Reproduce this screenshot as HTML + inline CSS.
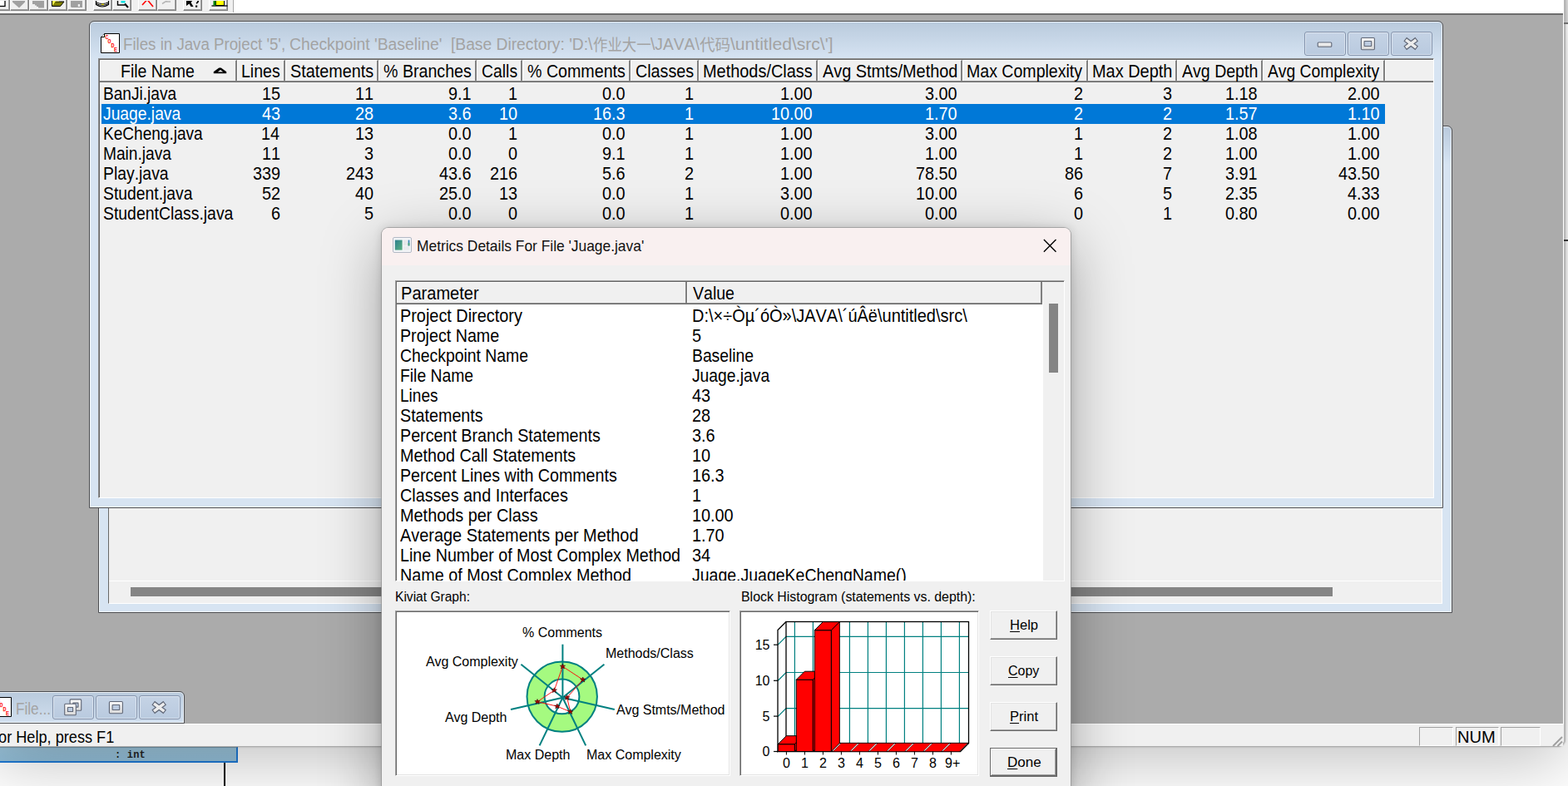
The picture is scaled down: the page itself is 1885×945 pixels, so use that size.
<!DOCTYPE html><html lang="en"><head><meta charset="utf-8"><title>Metrics Details</title><style>
*{box-sizing:border-box;margin:0;padding:0}
html,body{width:1885px;height:945px;overflow:hidden;background:#fff}
body{position:relative;font-family:"Liberation Sans","Noto Sans CJK SC",sans-serif;color:#000}
.abs{position:absolute}
.x{position:absolute;white-space:pre;font-kerning:none;font-size:22px;line-height:24px;transform-origin:0 0}
.s{position:absolute;white-space:pre;font-kerning:none;font-size:16px;line-height:18px;transform-origin:0 0}
.hd{position:absolute;top:72px;height:25px;background:#f0f0f0;border-left:1px solid #fff;border-top:1px solid #fff;border-right:2px solid #808080}
.frame{position:absolute;border:1px solid #4c4e52;border-radius:6px 6px 0 0;background:linear-gradient(#b9cadc 0,#d3e1f0 40px,#d7e4f2 46px,#d7e4f2 100%);box-shadow:inset 0 0 0 1px rgba(255,255,255,.7)}
.cap{position:absolute;border:1px solid #8594ad;border-radius:3px;background:linear-gradient(#c5d3e5,#b9cadf);box-shadow:inset 0 0 0 1px rgba(255,255,255,.4)}
.btn{position:absolute;left:1190px;width:81px;height:35px;background:#f0f0f0;border:1px solid;border-color:#fff #696969 #696969 #fff;box-shadow:inset -1px -1px 0 #a0a0a0,inset 1px 1px 0 #e3e3e3}
.sunk{position:absolute;background:#fff;border:1px solid;border-color:#a0a0a0 #fff #fff #a0a0a0;box-shadow:inset 1px 1px 0 #696969,inset -1px -1px 0 #e3e3e3}
</style></head><body>
<svg class="abs" width="0" height="0" style="left:0;top:0"><defs><linearGradient id="cg" x1="0" y1="0" x2="0" y2="1"><stop offset="0" stop-color="#fbfbfb"/><stop offset="1" stop-color="#d9d9d9"/></linearGradient></defs></svg>
<div class="abs" style="left:1882px;top:0;width:3px;height:28px;background:#ddd"></div>
<div class="abs" style="left:1880px;top:27px;width:5px;height:2px;background:#6e6e6e"></div>
<div class="abs" style="left:1880px;top:288px;width:5px;height:2px;background:#333"></div>
<div class="abs" style="left:0;top:898px;width:286px;height:19px;background:linear-gradient(#9cc5dc,#93bfd9);border-right:2px solid #1e7ad6;border-bottom:2px solid #1e7ad6;border-top:1px solid #7fa3b8"></div>
<div class="abs" style="left:138px;top:900px;font-family:'Liberation Mono',monospace;font-weight:bold;font-size:12px;line-height:16px;color:#222;white-space:pre;letter-spacing:.2px">: int</div>
<div class="abs" style="left:269px;top:917px;width:2px;height:28px;background:#000"></div>
<div class="abs" style="left:-11px;top:-11px;width:1893px;height:909px;background:#fff;border:1px solid #adadad;border-right:2px solid #b6b6b6;border-radius:0 0 9px 0;box-shadow:0 20px 80px rgba(0,0,0,.24),0 0 2px rgba(0,0,0,.3);overflow:hidden">
<div class="abs" style="left:0;top:0;width:291px;height:25px;background:#f0f0f0;border-right:1px solid #a8a8a8"></div>
<div class="abs" style="left:0;top:26px;width:1889px;height:2px;background:#6c6c6c"></div>
<div class="abs" style="left:0;top:28px;width:1889px;height:852px;background:#ababab"></div>
<div class="abs" style="left:0;top:881px;width:1892px;height:27px;background:#f0f0f0"></div>
</div>
<div class="abs" style="left:1880px;top:27px;width:5px;height:2px;background:#6e6e6e"></div>
<div class="abs" style="left:1880px;top:288px;width:5px;height:2px;background:#333"></div>
<div class="abs" style="left:-12px;top:-12px;width:24px;height:25px;background:#f0f0f0;border:1px solid;border-color:#fff #808080 #808080 #fff;box-shadow:inset -1px -1px 0 #a0a0a0"></div>
<div class="abs" style="left:12px;top:-12px;width:23px;height:25px;background:#f0f0f0;border:1px solid;border-color:#fff #808080 #808080 #fff;box-shadow:inset -1px -1px 0 #a0a0a0"></div>
<div class="abs" style="left:35px;top:-12px;width:23px;height:25px;background:#f0f0f0;border:1px solid;border-color:#fff #808080 #808080 #fff;box-shadow:inset -1px -1px 0 #a0a0a0"></div>
<div class="abs" style="left:58px;top:-12px;width:23px;height:25px;background:#f0f0f0;border:1px solid;border-color:#fff #808080 #808080 #fff;box-shadow:inset -1px -1px 0 #a0a0a0"></div>
<div class="abs" style="left:81px;top:-12px;width:23px;height:25px;background:#f0f0f0;border:1px solid;border-color:#fff #808080 #808080 #fff;box-shadow:inset -1px -1px 0 #a0a0a0"></div>
<div class="abs" style="left:112px;top:-12px;width:23px;height:25px;background:#f0f0f0;border:1px solid;border-color:#fff #808080 #808080 #fff;box-shadow:inset -1px -1px 0 #a0a0a0"></div>
<div class="abs" style="left:135px;top:-12px;width:23px;height:25px;background:#f0f0f0;border:1px solid;border-color:#fff #808080 #808080 #fff;box-shadow:inset -1px -1px 0 #a0a0a0"></div>
<div class="abs" style="left:166px;top:-12px;width:23px;height:25px;background:#f0f0f0;border:1px solid;border-color:#fff #808080 #808080 #fff;box-shadow:inset -1px -1px 0 #a0a0a0"></div>
<div class="abs" style="left:189px;top:-12px;width:23px;height:25px;background:#f0f0f0;border:1px solid;border-color:#fff #808080 #808080 #fff;box-shadow:inset -1px -1px 0 #a0a0a0"></div>
<div class="abs" style="left:220px;top:-12px;width:23px;height:25px;background:#f0f0f0;border:1px solid;border-color:#fff #808080 #808080 #fff;box-shadow:inset -1px -1px 0 #a0a0a0"></div>
<div class="abs" style="left:251px;top:-12px;width:23px;height:25px;background:#f0f0f0;border:1px solid;border-color:#fff #808080 #808080 #fff;box-shadow:inset -1px -1px 0 #a0a0a0"></div>
<svg class="abs" style="left:0;top:1px" width="290" height="11" viewBox="0 0 290 11"><rect x="-3" y="-3" width="9" height="9.5" fill="#fff" stroke="#000" stroke-width="1.3"/><path d="M15 0h15v1.5l-7 7-8-7z" fill="#a0a0a0"/><path d="M39 0h14v8.5h-7v-1.5h-2v-1.5h-2v-1.5h-3z" fill="#a0a0a0"/><path d="M62.5 -1v7.5h10l4.5-5.5h-10.5z" fill="#808000" stroke="#000" stroke-width="1"/><path d="M63 -1h8v1.5h-4l-4 5z" fill="#ffff50"/><path d="M85 -1h14v9h-13l-1-1z" fill="#a0a0a0"/><rect x="93.8" y="4" width="2.2" height="3" fill="#f0f0f0"/><path d="M115.5 0v4.5q7.5 5 15 0v-4.5" fill="#fff" stroke="#000" stroke-width="1.2"/><path d="M115.5 1.8q7.5 3.4 15 0M115.5 3.5q7.5 3.6 15 0" fill="none" stroke="#000" stroke-width="1"/><rect x="122" y="3.6" width="3" height="1.3" fill="#e8d800"/><path d="M141.5 -1v6h9" fill="none" stroke="#000" stroke-width="1.4"/><rect x="145.5" y="-2" width="5" height="4.5" fill="#00e0e0"/><path d="M150 3.5l4 4.5" stroke="#000" stroke-width="2"/><path d="M171 5l6-6.5 7 8.5" fill="none" stroke="#f00" stroke-width="1.6"/><path d="M195 3.5l4-2.5 3-2.5M199 1h6" stroke="#b4b4b4" stroke-width="1.5" fill="none"/><path d="M224 -1h8l-2.5 3 3 5h-3l-2-3.5-3.5 2.500z" fill="#000"/><path d="M235.500 -1c3.500 0 3.500 2.500 .5 4" stroke="#000" stroke-width="1.700" fill="none"/><rect x="235" y="5.500" width="2.200" height="2.200" fill="#000"/><rect x="259.500" y="-3" width="10" height="8.500" fill="#ff0" stroke="#000" stroke-width="1"/><path d="M254.500 6h19" stroke="#000" stroke-width="1.300"/><path d="M256.500 -2v8l3-1v-7z" fill="#008000"/></svg>
<div class="frame" style="left:118px;top:151px;width:1628px;height:586px"></div>
<div class="abs" style="left:130px;top:197px;width:1604px;height:529px;background:#f0f0f0;border:1px solid;border-color:#696969 #fff #fff #696969"></div>
<div class="abs" style="left:131px;top:698px;width:1602px;height:1px;background:#fff"></div>
<div class="abs" style="left:157px;top:706px;width:1445px;height:11px;background:#858585"></div>
<div class="frame" style="left:107px;top:25px;width:1628px;height:586px"></div>
<svg class="abs" style="left:121px;top:40px" width="23" height="24" viewBox="0 0 23 24"><path d="M4.5 .5h18v23h-22v-19z" fill="#fff" stroke="#000" stroke-width="1"/><path d="M.5 4.500h4v-4" fill="#fff" stroke="#000" stroke-width="1"/><g font-size="6.5" fill="#f00" stroke="#f00" stroke-width=".25" font-family="Liberation Mono,monospace"><text x="5.5" y="7">C</text><text x="8.5" y="11.5">O</text><text x="12.5" y="17">D</text><text x="16" y="22">E</text></g></svg>
<div class="x" style="left:148.17px;top:40.9px;font-size:20px;line-height:24px;transform:scaleX(0.9343);color:#a3a3a3">Files in Java Project '5',</div>
<div class="x" style="left:347.82px;top:40.9px;font-size:20px;line-height:24px;transform:scaleX(0.9662);color:#a3a3a3">Checkpoint 'Baseline'</div>
<div class="x" style="left:542.13px;top:40.9px;font-size:20px;line-height:24px;transform:scaleX(0.9615);color:#a3a3a3">[Base Directory: 'D:\</div>
<div class="x" style="left:712.5px;top:42.2px;font-size:19px;line-height:26px;color:#a3a3a3;transform:scaleX(0.9145)">作业大一</div>
<div class="x" style="left:781.7px;top:40.9px;font-size:20px;line-height:24px;transform:scaleX(0.9618);color:#a3a3a3">\JAVA\</div>
<div class="x" style="left:841.3px;top:42.2px;font-size:19px;line-height:26px;color:#a3a3a3;transform:scaleX(0.9789)">代码</div>
<div class="x" style="left:878.2px;top:40.9px;font-size:20px;line-height:24px;transform:scaleX(1.0547);color:#a3a3a3">\untitled\src\']</div>
<div class="cap" style="left:1568px;top:38px;width:50px;height:29px"></div>
<svg class="abs" style="left:1568px;top:38px" width="50" height="29" viewBox="0 0 50 29"><rect x="16.2" y="13" width="16.6" height="5.2" rx="1" fill="url(#cg)" stroke="#5f6676" stroke-width="1.1"/></svg>
<div class="cap" style="left:1620px;top:38px;width:50px;height:29px"></div>
<svg class="abs" style="left:1620px;top:38px" width="50" height="29" viewBox="0 0 50 29"><rect x="16.4" y="7.5" width="16" height="14.2" rx="1.2" fill="url(#cg)" stroke="#5f6676" stroke-width="1.1"/><rect x="20.1" y="11.5" width="8.6" height="6" rx="0.4" fill="#bccbe0" stroke="#5f6676" stroke-width="1.1"/></svg>
<div class="cap" style="left:1672px;top:38px;width:50px;height:29px"></div>
<svg class="abs" style="left:1672px;top:38px" width="50" height="29" viewBox="0 0 50 29"><path d="M17.2 9.2l14 10.6m0 -10.6l-14 10.6" stroke="#5f6676" stroke-width="6" stroke-linecap="butt"/><path d="M17.2 9.2m.8 .6l12.4 9.4m0 -9.4l-12.4 9.4" stroke="#ececec" stroke-width="3.5" stroke-linecap="butt"/></svg>
<div class="abs" style="left:118px;top:70px;width:1606px;height:529px;background:#f0f0f0;border:1px solid;border-color:#8c8c8c #fff #fff #8c8c8c;box-shadow:inset 1px 1px 0 #696969"></div>
<div class="abs" style="left:120px;top:97px;width:1603px;height:2px;background:linear-gradient(#8e8e8e 50%,#6a6a6a 50%)"></div>
<div class="hd" style="left:120px;width:165px"></div>
<div class="x" style="left:144.7px;top:73.5px;transform:scaleX(0.8855)">File Name</div>
<div class="hd" style="left:285px;width:58px"></div>
<div class="x" style="left:290.4px;top:73.5px;transform:scaleX(0.8881)">Lines</div>
<div class="hd" style="left:343px;width:112px"></div>
<div class="x" style="left:349.1px;top:73.5px;transform:scaleX(0.8988)">Statements</div>
<div class="hd" style="left:455px;width:118px"></div>
<div class="x" style="left:461.3px;top:73.5px;transform:scaleX(0.8920)">% Branches</div>
<div class="hd" style="left:573px;width:55px"></div>
<div class="x" style="left:579.02px;top:73.5px;transform:scaleX(0.8811)">Calls</div>
<div class="hd" style="left:628px;width:130px"></div>
<div class="x" style="left:634.3px;top:73.5px;transform:scaleX(0.8923)">% Comments</div>
<div class="hd" style="left:758px;width:82px"></div>
<div class="x" style="left:764px;top:73.5px;transform:scaleX(0.8961)">Classes</div>
<div class="hd" style="left:840px;width:143px"></div>
<div class="x" style="left:845.37px;top:73.5px;transform:scaleX(0.9055)">Methods/Class</div>
<div class="hd" style="left:983px;width:174px"></div>
<div class="x" style="left:988.96px;top:73.5px;transform:scaleX(0.9031)">Avg Stmts/Method</div>
<div class="hd" style="left:1157px;width:151px"></div>
<div class="x" style="left:1162.4px;top:73.5px;transform:scaleX(0.8886)">Max Complexity</div>
<div class="hd" style="left:1308px;width:107px"></div>
<div class="x" style="left:1313.37px;top:73.5px;transform:scaleX(0.9055)">Max Depth</div>
<div class="hd" style="left:1415px;width:103px"></div>
<div class="x" style="left:1420.96px;top:73.5px;transform:scaleX(0.8888)">Avg Depth</div>
<div class="hd" style="left:1518px;width:147px"></div>
<div class="x" style="left:1523.96px;top:73.5px;transform:scaleX(0.8773)">Avg Complexity</div>
<div class="hd" style="left:1665px;width:58px;border-right:0"></div>
<svg class="abs" style="left:256px;top:81px" width="18" height="8" viewBox="0 0 18 8"><path d="M.8 7.2v-2l6.5-4.7h2.4l6.5 4.7v2z" fill="#000"/><path d="M5.8 5.6h6.4l-3.2-2.5z" fill="#f0f0f0"/></svg>
<div class="x" style="left:124.1px;top:100.5px;transform:scaleX(0.8680)">BanJi.java</div>
<div class="x" style="left:314.66px;top:100.5px;transform:scaleX(0.9020)">15</div>
<div class="x" style="left:426.8px;top:100.5px;transform:scaleX(0.9020)">11</div>
<div class="x" style="left:539.28px;top:100.5px;transform:scaleX(0.9020)">9.1</div>
<div class="x" style="left:610.83px;top:100.5px;transform:scaleX(0.9020)">1</div>
<div class="x" style="left:724.09px;top:100.5px;transform:scaleX(0.9020)">0.0</div>
<div class="x" style="left:822.83px;top:100.5px;transform:scaleX(0.9020)">1</div>
<div class="x" style="left:938.05px;top:100.5px;transform:scaleX(0.9020)">1.00</div>
<div class="x" style="left:1112.05px;top:100.5px;transform:scaleX(0.9020)">3.00</div>
<div class="x" style="left:1290.86px;top:100.5px;transform:scaleX(0.9020)">2</div>
<div class="x" style="left:1397.74px;top:100.5px;transform:scaleX(0.9020)">3</div>
<div class="x" style="left:1473.14px;top:100.5px;transform:scaleX(0.9020)">1.18</div>
<div class="x" style="left:1620.05px;top:100.5px;transform:scaleX(0.9020)">2.00</div>
<div class="abs" style="left:122px;top:125px;width:1543px;height:24px;background:#0078d7"></div>
<div class="x" style="left:124.1px;top:124.5px;transform:scaleX(0.8758);color:#fff">Juage.java</div>
<div class="x" style="left:314.7px;top:124.5px;transform:scaleX(0.9020);color:#fff">43</div>
<div class="x" style="left:426.69px;top:124.5px;transform:scaleX(0.9020);color:#fff">28</div>
<div class="x" style="left:539.19px;top:124.5px;transform:scaleX(0.9020);color:#fff">3.6</div>
<div class="x" style="left:599.6px;top:124.5px;transform:scaleX(0.9020);color:#fff">10</div>
<div class="x" style="left:713.15px;top:124.5px;transform:scaleX(0.9020);color:#fff">16.3</div>
<div class="x" style="left:822.83px;top:124.5px;transform:scaleX(0.9020);color:#fff">1</div>
<div class="x" style="left:927.02px;top:124.5px;transform:scaleX(0.9020);color:#fff">10.00</div>
<div class="x" style="left:1112.05px;top:124.5px;transform:scaleX(0.9020);color:#fff">1.70</div>
<div class="x" style="left:1290.86px;top:124.5px;transform:scaleX(0.9020);color:#fff">2</div>
<div class="x" style="left:1397.86px;top:124.5px;transform:scaleX(0.9020);color:#fff">2</div>
<div class="x" style="left:1473.28px;top:124.5px;transform:scaleX(0.9020);color:#fff">1.57</div>
<div class="x" style="left:1620.05px;top:124.5px;transform:scaleX(0.9020);color:#fff">1.10</div>
<div class="x" style="left:124.1px;top:148.5px;transform:scaleX(0.8661)">KeCheng.java</div>
<div class="x" style="left:314.41px;top:148.5px;transform:scaleX(0.9020)">14</div>
<div class="x" style="left:426.7px;top:148.5px;transform:scaleX(0.9020)">13</div>
<div class="x" style="left:539.09px;top:148.5px;transform:scaleX(0.9020)">0.0</div>
<div class="x" style="left:610.83px;top:148.5px;transform:scaleX(0.9020)">1</div>
<div class="x" style="left:724.09px;top:148.5px;transform:scaleX(0.9020)">0.0</div>
<div class="x" style="left:822.83px;top:148.5px;transform:scaleX(0.9020)">1</div>
<div class="x" style="left:938.05px;top:148.5px;transform:scaleX(0.9020)">1.00</div>
<div class="x" style="left:1112.05px;top:148.5px;transform:scaleX(0.9020)">3.00</div>
<div class="x" style="left:1290.83px;top:148.5px;transform:scaleX(0.9020)">1</div>
<div class="x" style="left:1397.86px;top:148.5px;transform:scaleX(0.9020)">2</div>
<div class="x" style="left:1473.14px;top:148.5px;transform:scaleX(0.9020)">1.08</div>
<div class="x" style="left:1620.05px;top:148.5px;transform:scaleX(0.9020)">1.00</div>
<div class="x" style="left:124.1px;top:172.5px;transform:scaleX(0.8709)">Main.java</div>
<div class="x" style="left:314.8px;top:172.5px;transform:scaleX(0.9020)">11</div>
<div class="x" style="left:437.74px;top:172.5px;transform:scaleX(0.9020)">3</div>
<div class="x" style="left:539.09px;top:172.5px;transform:scaleX(0.9020)">0.0</div>
<div class="x" style="left:610.64px;top:172.5px;transform:scaleX(0.9020)">0</div>
<div class="x" style="left:724.28px;top:172.5px;transform:scaleX(0.9020)">9.1</div>
<div class="x" style="left:822.83px;top:172.5px;transform:scaleX(0.9020)">1</div>
<div class="x" style="left:938.05px;top:172.5px;transform:scaleX(0.9020)">1.00</div>
<div class="x" style="left:1112.05px;top:172.5px;transform:scaleX(0.9020)">1.00</div>
<div class="x" style="left:1290.83px;top:172.5px;transform:scaleX(0.9020)">1</div>
<div class="x" style="left:1397.86px;top:172.5px;transform:scaleX(0.9020)">2</div>
<div class="x" style="left:1473.05px;top:172.5px;transform:scaleX(0.9020)">1.00</div>
<div class="x" style="left:1620.05px;top:172.5px;transform:scaleX(0.9020)">1.00</div>
<div class="x" style="left:124.1px;top:196.5px;transform:scaleX(0.8805)">Play.java</div>
<div class="x" style="left:303.73px;top:196.5px;transform:scaleX(0.9020)">339</div>
<div class="x" style="left:415.66px;top:196.5px;transform:scaleX(0.9020)">243</div>
<div class="x" style="left:528.15px;top:196.5px;transform:scaleX(0.9020)">43.6</div>
<div class="x" style="left:588.66px;top:196.5px;transform:scaleX(0.9020)">216</div>
<div class="x" style="left:724.19px;top:196.5px;transform:scaleX(0.9020)">5.6</div>
<div class="x" style="left:822.86px;top:196.5px;transform:scaleX(0.9020)">2</div>
<div class="x" style="left:938.05px;top:196.5px;transform:scaleX(0.9020)">1.00</div>
<div class="x" style="left:1101.02px;top:196.5px;transform:scaleX(0.9020)">78.50</div>
<div class="x" style="left:1279.7px;top:196.5px;transform:scaleX(0.9020)">86</div>
<div class="x" style="left:1397.86px;top:196.5px;transform:scaleX(0.9020)">7</div>
<div class="x" style="left:1473.25px;top:196.5px;transform:scaleX(0.9020)">3.91</div>
<div class="x" style="left:1609.02px;top:196.5px;transform:scaleX(0.9020)">43.50</div>
<div class="x" style="left:124.1px;top:220.5px;transform:scaleX(0.8789)">Student.java</div>
<div class="x" style="left:314.83px;top:220.5px;transform:scaleX(0.9020)">52</div>
<div class="x" style="left:426.6px;top:220.5px;transform:scaleX(0.9020)">40</div>
<div class="x" style="left:528.05px;top:220.5px;transform:scaleX(0.9020)">25.0</div>
<div class="x" style="left:599.7px;top:220.5px;transform:scaleX(0.9020)">13</div>
<div class="x" style="left:724.09px;top:220.5px;transform:scaleX(0.9020)">0.0</div>
<div class="x" style="left:822.83px;top:220.5px;transform:scaleX(0.9020)">1</div>
<div class="x" style="left:938.05px;top:220.5px;transform:scaleX(0.9020)">3.00</div>
<div class="x" style="left:1101.02px;top:220.5px;transform:scaleX(0.9020)">10.00</div>
<div class="x" style="left:1290.74px;top:220.5px;transform:scaleX(0.9020)">6</div>
<div class="x" style="left:1397.7px;top:220.5px;transform:scaleX(0.9020)">5</div>
<div class="x" style="left:1473.11px;top:220.5px;transform:scaleX(0.9020)">2.35</div>
<div class="x" style="left:1620.15px;top:220.5px;transform:scaleX(0.9020)">4.33</div>
<div class="x" style="left:124.1px;top:244.5px;transform:scaleX(0.8820)">StudentClass.java</div>
<div class="x" style="left:325.74px;top:244.5px;transform:scaleX(0.9020)">6</div>
<div class="x" style="left:437.7px;top:244.5px;transform:scaleX(0.9020)">5</div>
<div class="x" style="left:539.09px;top:244.5px;transform:scaleX(0.9020)">0.0</div>
<div class="x" style="left:610.64px;top:244.5px;transform:scaleX(0.9020)">0</div>
<div class="x" style="left:724.09px;top:244.5px;transform:scaleX(0.9020)">0.0</div>
<div class="x" style="left:822.83px;top:244.5px;transform:scaleX(0.9020)">1</div>
<div class="x" style="left:938.05px;top:244.5px;transform:scaleX(0.9020)">0.00</div>
<div class="x" style="left:1112.05px;top:244.5px;transform:scaleX(0.9020)">0.00</div>
<div class="x" style="left:1290.64px;top:244.5px;transform:scaleX(0.9020)">0</div>
<div class="x" style="left:1397.83px;top:244.5px;transform:scaleX(0.9020)">1</div>
<div class="x" style="left:1473.05px;top:244.5px;transform:scaleX(0.9020)">0.80</div>
<div class="x" style="left:1620.05px;top:244.5px;transform:scaleX(0.9020)">0.00</div>
<div class="frame" style="left:-10px;top:831px;width:232px;height:39px"></div>
<svg class="abs" style="left:-9px;top:838px" width="23" height="24" viewBox="0 0 23 24"><path d="M4.5 .5h18v23h-22v-19z" fill="#fff" stroke="#000" stroke-width="1"/><path d="M.5 4.500h4v-4" fill="#fff" stroke="#000" stroke-width="1"/><g font-size="6.5" fill="#f00" stroke="#f00" stroke-width=".25" font-family="Liberation Mono,monospace"><text x="5.5" y="7">C</text><text x="8.5" y="11.5">O</text><text x="12.5" y="17">D</text><text x="16" y="22">E</text></g></svg>
<div class="x" style="left:18.59px;top:841.4px;font-size:20px;line-height:23px;transform:scaleX(0.8585);color:#a3a3a3">File...</div>
<div class="cap" style="left:63px;top:836px;width:50px;height:29px"></div>
<svg class="abs" style="left:63px;top:836px" width="50" height="29" viewBox="0 0 50 29"><rect x="21.1" y="4.9" width="13.6" height="13.4" rx="1" fill="url(#cg)" stroke="#5f6676" stroke-width="1.1"/><rect x="24.8" y="9.1" width="6.2" height="5" rx="0.3" fill="#bccbe0" stroke="#5f6676" stroke-width="1.1"/><rect x="14.7" y="10.3" width="13.6" height="13.4" rx="1" fill="url(#cg)" stroke="#5f6676" stroke-width="1.1"/><rect x="18.4" y="14.5" width="6.2" height="5" rx="0.3" fill="#bccbe0" stroke="#5f6676" stroke-width="1.1"/></svg>
<div class="cap" style="left:115px;top:836px;width:50px;height:29px"></div>
<svg class="abs" style="left:115px;top:836px" width="50" height="29" viewBox="0 0 50 29"><rect x="16.4" y="7.5" width="16" height="14.2" rx="1.2" fill="url(#cg)" stroke="#5f6676" stroke-width="1.1"/><rect x="20.1" y="11.5" width="8.6" height="6" rx="0.4" fill="#bccbe0" stroke="#5f6676" stroke-width="1.1"/></svg>
<div class="cap" style="left:167px;top:836px;width:50px;height:29px"></div>
<svg class="abs" style="left:167px;top:836px" width="50" height="29" viewBox="0 0 50 29"><path d="M17.2 9.2l14 10.6m0 -10.6l-14 10.6" stroke="#5f6676" stroke-width="6" stroke-linecap="butt"/><path d="M17.2 9.2m.8 .6l12.4 9.4m0 -9.4l-12.4 9.4" stroke="#ececec" stroke-width="3.5" stroke-linecap="butt"/></svg>
<div class="abs" style="left:0;top:870px;width:1879px;height:1px;background:#fff"></div>
<div class="abs" style="left:0;top:871px;width:1879px;height:26px;background:#f0f0f0"></div>
<div class="x" style="left:-13.49px;top:872.9px;font-size:20.3px;line-height:26px;transform:scaleX(0.8946)">For Help, press F1</div>
<div class="abs" style="left:1706px;top:874px;width:41px;height:23px;border:1px solid;border-color:#a0a0a0 #fff #fff #a0a0a0"></div>
<div class="abs" style="left:1750px;top:874px;width:52px;height:23px;border:1px solid;border-color:#a0a0a0 #fff #fff #a0a0a0"></div>
<div class="abs" style="left:1804px;top:874px;width:48px;height:23px;border:1px solid;border-color:#a0a0a0 #fff #fff #a0a0a0"></div>
<div class="x" style="left:1751.75px;top:872.5px;font-size:20.3px;line-height:26px;transform:scaleX(0.9930)">NUM</div>
<svg class="abs" style="left:1858px;top:877px" width="21" height="21" viewBox="0 0 21 21"><path d="M9 20L20 9M14.5 20L20 14.5" stroke="#a0a0a0" stroke-width="2" fill="none"/></svg>
<div class="abs" style="left:459px;top:274px;width:828px;height:700px;background:#f0f0f0;border-radius:8px;box-shadow:0 0 0 1px rgba(150,150,150,.75),0 20px 70px rgba(0,0,0,.34),0 0 12px rgba(0,0,0,.16);overflow:hidden">
<div class="abs" style="left:0;top:0;width:828px;height:45px;background:#f9f0f0"></div>
</div>
<svg class="abs" style="left:472px;top:285px" width="23" height="19" viewBox="0 0 23 19"><defs><linearGradient id="g1" x1="0" y1="0" x2="1" y2="1"><stop offset="0" stop-color="#2c7f8e"/><stop offset="1" stop-color="#58b080"/></linearGradient></defs><rect x=".5" y=".5" width="22" height="18" rx="1.5" fill="#f2f4f7" stroke="#b4bac6"/><rect x="2.8" y="3.6" width="8.8" height="12" fill="url(#g1)"/><rect x="13" y="3.6" width="4.5" height="6.5" fill="#e6e8ea"/><rect x="18.6" y="3.6" width="1.8" height="6.8" fill="#3f86b8"/><rect x="18.6" y="7" width="1.8" height="3.4" fill="#4fa878"/><rect x="13" y="11.2" width="7.4" height="4.4" fill="#e9ebee"/></svg>
<div class="x" style="left:501.27px;top:283.7px;font-size:18.6px;line-height:24px;transform:scaleX(0.9347);color:#111">Metrics Details For File 'Juage.java'</div>
<svg class="abs" style="left:1253px;top:286px" width="19" height="19" viewBox="0 0 19 19"><path d="M1.9 2.1l14.6 14.6M16.5 2.1L1.9 16.7" stroke="#000" stroke-width="1.4" fill="none"/></svg>
<div class="sunk" style="left:475px;top:337px;width:805px;height:362px"></div>
<div class="abs" style="left:1254px;top:339px;width:25px;height:359px;background:#f0f0f0"></div>
<div class="abs" style="left:1261px;top:365px;width:11px;height:83px;background:#858585"></div>
<div class="abs" style="left:477px;top:339px;width:777px;height:25px;background:#f0f0f0;border-top:1px solid #fff;border-left:1px solid #fff"></div>
<div class="abs" style="left:477px;top:364px;width:776px;height:2px;background:linear-gradient(#8e8e8e 50%,#6a6a6a 50%)"></div>
<div class="abs" style="left:824px;top:339px;width:2px;height:26px;background:#808080"></div><div class="abs" style="left:826px;top:340px;width:1px;height:24px;background:#fff"></div>
<div class="abs" style="left:1251px;top:339px;width:2px;height:26px;background:#808080"></div>
<div class="x" style="left:481.95px;top:340.5px;transform:scaleX(0.9121)">Parameter</div>
<div class="x" style="left:832.81px;top:340.5px;transform:scaleX(0.8880)">Value</div>
<div class="abs" style="left:477px;top:366px;width:777px;height:332px;overflow:hidden;background:#fff">
<div class="x" style="left:4.1px;top:1.5px;transform:scaleX(0.9031)">Project Directory</div>
<div class="x" style="left:355.3px;top:1.5px;transform:scaleX(0.9084)">D:\×÷Òµ´óÒ»\JAVA\´úÂë\untitled\src\</div>
<div class="x" style="left:4.1px;top:25.5px;transform:scaleX(0.8942)">Project Name</div>
<div class="x" style="left:355.3px;top:25.5px;transform:scaleX(0.9020)">5</div>
<div class="x" style="left:4.1px;top:49.5px;transform:scaleX(0.8805)">Checkpoint Name</div>
<div class="x" style="left:355.3px;top:49.5px;transform:scaleX(0.8776)">Baseline</div>
<div class="x" style="left:4.1px;top:73.5px;transform:scaleX(0.8784)">File Name</div>
<div class="x" style="left:355.3px;top:73.5px;transform:scaleX(0.8749)">Juage.java</div>
<div class="x" style="left:4.1px;top:97.5px;transform:scaleX(0.8649)">Lines</div>
<div class="x" style="left:355.3px;top:97.5px;transform:scaleX(0.9020)">43</div>
<div class="x" style="left:4.1px;top:121.5px;transform:scaleX(0.8952)">Statements</div>
<div class="x" style="left:355.3px;top:121.5px;transform:scaleX(0.9020)">28</div>
<div class="x" style="left:4.1px;top:145.5px;transform:scaleX(0.8951)">Percent Branch Statements</div>
<div class="x" style="left:355.3px;top:145.5px;transform:scaleX(0.9020)">3.6</div>
<div class="x" style="left:4.1px;top:169.5px;transform:scaleX(0.8988)">Method Call Statements</div>
<div class="x" style="left:355.3px;top:169.5px;transform:scaleX(0.9020)">10</div>
<div class="x" style="left:4.1px;top:193.5px;transform:scaleX(0.8921)">Percent Lines with Comments</div>
<div class="x" style="left:355.3px;top:193.5px;transform:scaleX(0.9020)">16.3</div>
<div class="x" style="left:4.1px;top:217.5px;transform:scaleX(0.9018)">Classes and Interfaces</div>
<div class="x" style="left:355.3px;top:217.5px;transform:scaleX(0.9020)">1</div>
<div class="x" style="left:4.1px;top:241.5px;transform:scaleX(0.9035)">Methods per Class</div>
<div class="x" style="left:355.3px;top:241.5px;transform:scaleX(0.9020)">10.00</div>
<div class="x" style="left:4.1px;top:265.5px;transform:scaleX(0.9045)">Average Statements per Method</div>
<div class="x" style="left:355.3px;top:265.5px;transform:scaleX(0.9020)">1.70</div>
<div class="x" style="left:4.1px;top:289.5px;transform:scaleX(0.8950)">Line Number of Most Complex Method</div>
<div class="x" style="left:355.3px;top:289.5px;transform:scaleX(0.9020)">34</div>
<div class="x" style="left:4.1px;top:313.5px;transform:scaleX(0.8989)">Name of Most Complex Method</div>
<div class="x" style="left:355.3px;top:313.5px;transform:scaleX(0.8854)">Juage.JuageKeChengName()</div>
</div>
<div class="s" style="left:475.12px;top:708.5px;transform:scaleX(0.9731)">Kiviat Graph:</div>
<div class="s" style="left:890.9px;top:708.5px;transform:scaleX(0.9933)">Block Histogram (statements vs. depth):</div>
<div class="sunk" style="left:475px;top:734px;width:403px;height:199px"></div>
<div class="sunk" style="left:889px;top:734px;width:288px;height:199px"></div>
<svg class="abs" style="left:477px;top:736px" width="399" height="195" viewBox="477 736 399 195" font-family="Liberation Sans,sans-serif" font-size="16"><circle cx="675.7" cy="837.6" r="42.2" fill="#a5fa80" stroke="#008080" stroke-width="2"/><circle cx="675.5" cy="837.4" r="20.9" fill="#fff" stroke="#008080" stroke-width="2"/><line x1="676.4" y1="838.7" x2="676.4" y2="774.7" stroke="#008080" stroke-width="2"/><line x1="676.4" y1="838.7" x2="726.4" y2="798.8" stroke="#008080" stroke-width="2"/><line x1="676.4" y1="838.7" x2="738.8" y2="852.9" stroke="#008080" stroke-width="2"/><line x1="676.4" y1="838.7" x2="704.2" y2="896.4" stroke="#008080" stroke-width="2"/><line x1="676.4" y1="838.7" x2="648.6" y2="896.4" stroke="#008080" stroke-width="2"/><line x1="676.4" y1="838.7" x2="614.0" y2="852.9" stroke="#008080" stroke-width="2"/><line x1="676.4" y1="838.7" x2="626.4" y2="798.8" stroke="#008080" stroke-width="2"/><polygon points="676.4,801.3 700.7,817.2 681.7,838.7 685.7,855.8 669.8,849.2 646.0,843.7 666.3,830.0" fill="none" stroke="#f00" stroke-width="0.9"/><path d="M676.4 798.1l.9 2.1h2.3l-1.800 1.5.7 2.3-2.1-1.4-2.1 1.4.7-2.3-1.800-1.5h2.3z" fill="#a00000" stroke="#300" stroke-width=".5"/><path d="M700.7 814.0l.9 2.1h2.3l-1.800 1.5.7 2.3-2.1-1.4-2.1 1.4.7-2.3-1.800-1.5h2.3z" fill="#a00000" stroke="#300" stroke-width=".5"/><path d="M681.7 835.5l.9 2.1h2.3l-1.800 1.5.7 2.3-2.1-1.4-2.1 1.4.7-2.3-1.800-1.5h2.3z" fill="#a00000" stroke="#300" stroke-width=".5"/><path d="M685.7 852.6l.9 2.1h2.3l-1.800 1.5.7 2.3-2.1-1.4-2.1 1.4.7-2.3-1.800-1.5h2.3z" fill="#a00000" stroke="#300" stroke-width=".5"/><path d="M669.8 846.0l.9 2.1h2.3l-1.800 1.5.7 2.3-2.1-1.4-2.1 1.4.7-2.3-1.800-1.5h2.3z" fill="#a00000" stroke="#300" stroke-width=".5"/><path d="M646.0 840.5l.9 2.1h2.3l-1.800 1.5.7 2.3-2.1-1.4-2.1 1.4.7-2.3-1.800-1.5h2.3z" fill="#a00000" stroke="#300" stroke-width=".5"/><path d="M666.3 826.8l.9 2.1h2.3l-1.800 1.5.7 2.3-2.1-1.4-2.1 1.4.7-2.3-1.800-1.5h2.3z" fill="#a00000" stroke="#300" stroke-width=".5"/><text x="628" y="765.5">% Comments</text><text x="728" y="791">Methods/Class</text><text x="741" y="858.7">Avg Stmts/Method</text><text x="705" y="913">Max Complexity</text><text x="608" y="913">Max Depth</text><text x="535" y="868">Avg Depth</text><text x="512" y="801">Avg Complexity</text></svg>
<svg class="abs" style="left:891px;top:736px" width="284" height="195" viewBox="891 736 284 195" font-family="Liberation Sans,sans-serif" font-size="16"><line x1="955.4" y1="747.5" x2="955.4" y2="893.5" stroke="#008080" stroke-width="1.2"/><line x1="977.4" y1="747.5" x2="977.4" y2="893.5" stroke="#008080" stroke-width="1.2"/><line x1="999.4" y1="747.5" x2="999.4" y2="893.5" stroke="#008080" stroke-width="1.2"/><line x1="1021.4" y1="747.5" x2="1021.4" y2="893.5" stroke="#008080" stroke-width="1.2"/><line x1="1043.4" y1="747.5" x2="1043.4" y2="893.5" stroke="#008080" stroke-width="1.2"/><line x1="1065.4" y1="747.5" x2="1065.4" y2="893.5" stroke="#008080" stroke-width="1.2"/><line x1="1087.4" y1="747.5" x2="1087.4" y2="893.5" stroke="#008080" stroke-width="1.2"/><line x1="1109.4" y1="747.5" x2="1109.4" y2="893.5" stroke="#008080" stroke-width="1.2"/><line x1="1131.4" y1="747.5" x2="1131.4" y2="893.5" stroke="#008080" stroke-width="1.2"/><line x1="1153.4" y1="747.5" x2="1153.4" y2="893.5" stroke="#008080" stroke-width="1.2"/><path d="M1164.5 765.4H945.0l-10 10" fill="none" stroke="#008080" stroke-width="1.2"/><path d="M1164.5 808.5H945.0l-10 10" fill="none" stroke="#008080" stroke-width="1.2"/><path d="M1164.5 851.6H945.0l-10 10" fill="none" stroke="#008080" stroke-width="1.2"/><rect x="945.0" y="747.5" width="219.5" height="146.0" fill="none" stroke="#000" stroke-width="1.3"/><path d="M945.0 747.5l-10 10v146l10 -10" fill="none" stroke="#000" stroke-width="1.3"/><path d="M1164.5 893.5l-10 10h-219.5" fill="none" stroke="#000" stroke-width="1.3"/><path d="M955.3 894.7l10 -10v8.8l-10 10z" fill="#f00" stroke="#000" stroke-width="1"/><rect x="935.3" y="894.7" width="20.0" height="8.8" fill="#f00" stroke="#000" stroke-width="1"/><path d="M935.3 894.7l10 -10h20.0l-10 10z" fill="#f00" stroke="#000" stroke-width="1"/><path d="M977.3 817.2l10 -10v86.3l-10 10z" fill="#f00" stroke="#000" stroke-width="1"/><rect x="957.3" y="817.2" width="20.0" height="86.3" fill="#f00" stroke="#000" stroke-width="1"/><path d="M957.3 817.2l10 -10h20.0l-10 10z" fill="#f00" stroke="#000" stroke-width="1"/><path d="M999.3 757.7l10 -10v145.8l-10 10z" fill="#f00" stroke="#000" stroke-width="1"/><rect x="979.3" y="757.7" width="20.0" height="145.8" fill="#f00" stroke="#000" stroke-width="1"/><path d="M979.3 757.7l10 -10h20.0l-10 10z" fill="#f00" stroke="#000" stroke-width="1"/><path d="M1001.3 903.5l10 -10h20.0l-10 10z" fill="#f00" stroke="#000" stroke-width=".5"/><path d="M1023.3 903.5l10 -10h20.0l-10 10z" fill="#f00" stroke="#000" stroke-width=".5"/><path d="M1045.3 903.5l10 -10h20.0l-10 10z" fill="#f00" stroke="#000" stroke-width=".5"/><path d="M1067.3 903.5l10 -10h20.0l-10 10z" fill="#f00" stroke="#000" stroke-width=".5"/><path d="M1089.3 903.5l10 -10h20.0l-10 10z" fill="#f00" stroke="#000" stroke-width=".5"/><path d="M1111.3 903.5l10 -10h20.0l-10 10z" fill="#f00" stroke="#000" stroke-width=".5"/><path d="M1133.3 903.5l10 -10h20.0l-10 10z" fill="#f00" stroke="#000" stroke-width=".5"/><line x1="930" y1="775.2" x2="935" y2="775.2" stroke="#000" stroke-width="1.2"/><text x="925.5" y="780.9" text-anchor="end">15</text><line x1="930" y1="818.3" x2="935" y2="818.3" stroke="#000" stroke-width="1.2"/><text x="925.5" y="824.0" text-anchor="end">10</text><line x1="930" y1="861.1" x2="935" y2="861.1" stroke="#000" stroke-width="1.2"/><text x="925.5" y="866.8" text-anchor="end">5</text><line x1="930" y1="903.5" x2="935" y2="903.5" stroke="#000" stroke-width="1.2"/><text x="925.5" y="909.2" text-anchor="end">0</text><line x1="945.4" y1="903.5" x2="945.4" y2="907.5" stroke="#000" stroke-width="1"/><text x="945.4" y="923" text-anchor="middle">0</text><line x1="967.4" y1="903.5" x2="967.4" y2="907.5" stroke="#000" stroke-width="1"/><text x="967.4" y="923" text-anchor="middle">1</text><line x1="989.4" y1="903.5" x2="989.4" y2="907.5" stroke="#000" stroke-width="1"/><text x="989.4" y="923" text-anchor="middle">2</text><line x1="1011.4" y1="903.5" x2="1011.4" y2="907.5" stroke="#000" stroke-width="1"/><text x="1011.4" y="923" text-anchor="middle">3</text><line x1="1033.4" y1="903.5" x2="1033.4" y2="907.5" stroke="#000" stroke-width="1"/><text x="1033.4" y="923" text-anchor="middle">4</text><line x1="1055.4" y1="903.5" x2="1055.4" y2="907.5" stroke="#000" stroke-width="1"/><text x="1055.4" y="923" text-anchor="middle">5</text><line x1="1077.4" y1="903.5" x2="1077.4" y2="907.5" stroke="#000" stroke-width="1"/><text x="1077.4" y="923" text-anchor="middle">6</text><line x1="1099.4" y1="903.5" x2="1099.4" y2="907.5" stroke="#000" stroke-width="1"/><text x="1099.4" y="923" text-anchor="middle">7</text><line x1="1121.4" y1="903.5" x2="1121.4" y2="907.5" stroke="#000" stroke-width="1"/><text x="1121.4" y="923" text-anchor="middle">8</text><line x1="1143.4" y1="903.5" x2="1143.4" y2="907.5" stroke="#000" stroke-width="1"/><text x="1145.2" y="923" text-anchor="middle">9+</text></svg>
<div class="btn" style="top:734px"></div>
<div class="s" style="left:1213.84px;top:743px;transform:scaleX(1.0349)"><u style="text-underline-offset:2px">H</u>elp</div>
<div class="btn" style="top:789px"></div>
<div class="s" style="left:1212.14px;top:798px;transform:scaleX(0.9998)"><u style="text-underline-offset:2px">C</u>opy</div>
<div class="btn" style="top:844px"></div>
<div class="s" style="left:1213.59px;top:853px;transform:scaleX(1.0328)"><u style="text-underline-offset:2px">P</u>rint</div>
<div class="btn" style="top:899px;border-color:#696969;box-shadow:inset -1px -1px 0 #696969,inset 1px 1px 0 #fff,inset -2px -2px 0 #a0a0a0"></div>
<div class="s" style="left:1210.56px;top:908px;transform:scaleX(1.0628)"><u style="text-underline-offset:2px">D</u>one</div>
</body></html>
